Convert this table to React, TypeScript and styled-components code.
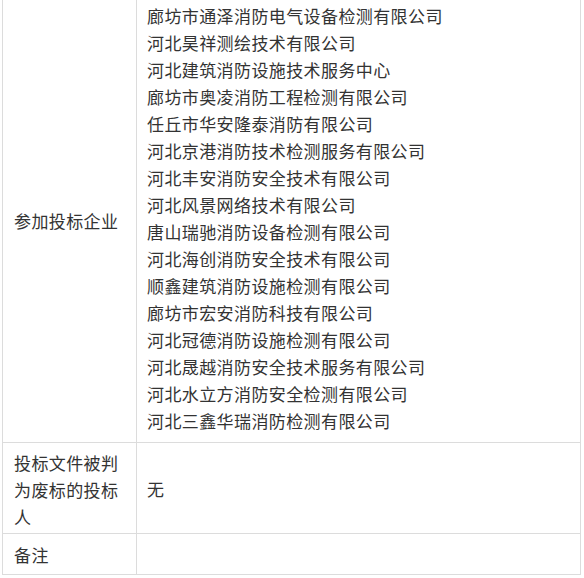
import React from 'react'
import styled, { createGlobalStyle } from 'styled-components'

const GlobalStyle = createGlobalStyle`
    html, body {
        margin: 0;
        padding: 0;
        background: #fff;
    }
`
const Wrap = styled.div`
    padding-left: 2px;
    margin-top: -2px;
    font-family: "Noto Sans CJK SC", "Microsoft YaHei", sans-serif;
    color: #333;
`
const Table = styled.table`
    width: 579px;
    border-collapse: collapse;
    table-layout: fixed;
    font-size: 17px;
    letter-spacing: 0.4px;
    line-height: 27px;
`
const Cell = styled.td<{ $label?: boolean; $h?: number; $pad?: string }>`
    border: 1px solid #dcdcdc;
    vertical-align: middle;
    width: ${p => (p.$label ? '134px' : 'auto')};
    padding: ${p => p.$pad || '5px 10px 5px 11px'};
    height: ${p => (p.$h ? p.$h + 'px' : 'auto')};
    box-sizing: border-box;
`
const Line = styled.div`
    white-space: nowrap;
`

const companies = [
    '廊坊市通泽消防电气设备检测有限公司',
    '河北昊祥测绘技术有限公司',
    '河北建筑消防设施技术服务中心',
    '廊坊市奥凌消防工程检测有限公司',
    '任丘市华安隆泰消防有限公司',
    '河北京港消防技术检测服务有限公司',
    '河北丰安消防安全技术有限公司',
    '河北风景网络技术有限公司',
    '唐山瑞驰消防设备检测有限公司',
    '河北海创消防安全技术有限公司',
    '顺鑫建筑消防设施检测有限公司',
    '廊坊市宏安消防科技有限公司',
    '河北冠德消防设施检测有限公司',
    '河北晟越消防安全技术服务有限公司',
    '河北水立方消防安全检测有限公司',
    '河北三鑫华瑞消防检测有限公司',
]

const App = () => {
    return (
        <Wrap>
            <GlobalStyle />
            <Table>
                <tbody>
                    <tr>
                        <Cell $label>参加投标企业</Cell>
                        <Cell $pad="3px 10px 8px 10px">
                            {companies.map(c => (
                                <Line key={c}>{c}</Line>
                            ))}
                        </Cell>
                    </tr>
                    <tr>
                        <Cell $label $pad="6px 10px 3px 11px">投标文件被判为废标的投标人</Cell>
                        <Cell $pad="5px 10px">无</Cell>
                    </tr>
                    <tr>
                        <Cell $label $h={41}>备注</Cell>
                        <Cell $h={41}></Cell>
                    </tr>
                </tbody>
            </Table>
        </Wrap>
    )
}

export default App
